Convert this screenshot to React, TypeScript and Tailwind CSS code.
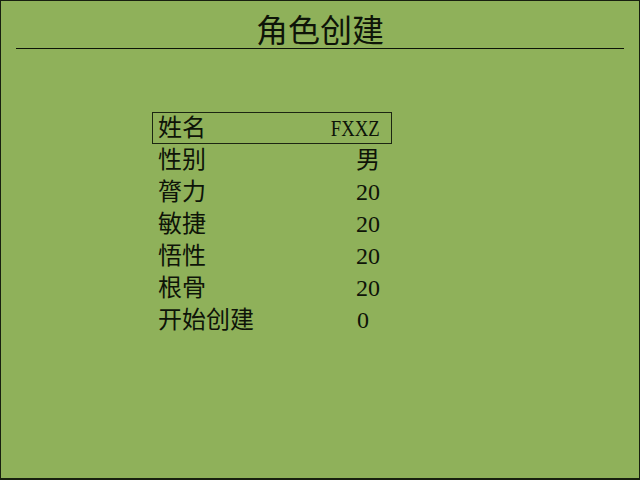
const rows = [
  { label: '姓名', value: 'FXXZ' },
  { label: '性别', value: '男' },
  { label: '膂力', value: '20' },
  { label: '敏捷', value: '20' },
  { label: '悟性', value: '20' },
  { label: '根骨', value: '20' },
];

const App = () => {
  const font = { fontFamily: '"Liberation Serif", "Noto Sans CJK SC", serif' };

  return (
    <div
      className="box-border h-[480px] w-[640px] overflow-hidden border border-b-2 border-[#18200f] bg-[#8fb15a] text-[#0e1408]"
      style={font}
    >
      <div className="mx-[15px] mt-[14px] border-b border-[#0e1408] pb-[1px] text-center text-[32px] leading-[32px]">
        角色创建
      </div>

      <div className="ml-[151px] mt-[63px] w-[240px] text-[24px]">
        {rows.map((row, i) => (
          <div
            key={row.label}
            className={`flex h-[32px] items-center justify-between border pl-[5px] pr-[11px] ${
              i === 0 ? 'border-[#1c2612]' : 'border-transparent'
            }`}
          >
            <span>{row.label}</span>
            <span className={i === 0 ? 'inline-block origin-right scale-x-[0.78]' : ''}>{row.value}</span>
          </div>
        ))}
        <div className="flex h-[32px] items-center border border-transparent pl-[5px]">
          <span className="w-[199px]">开始创建</span>
          <span>0</span>
        </div>
      </div>
    </div>
  );
};

export default App;
